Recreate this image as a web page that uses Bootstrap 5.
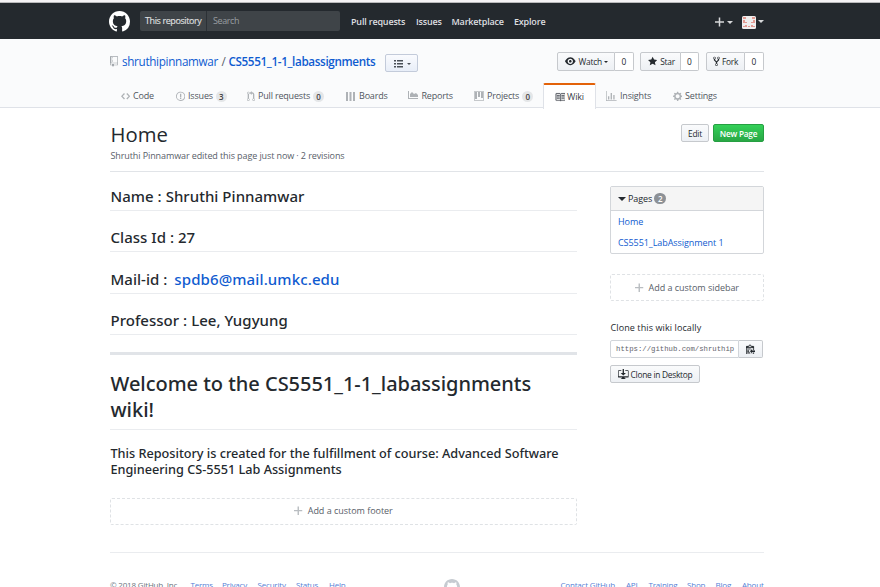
<!DOCTYPE html>
<html lang="en">
<head>
<meta charset="utf-8">
<title>Home · CS5551_1-1_labassignments Wiki</title>
<link href="https://cdn.jsdelivr.net/npm/bootstrap@5.3.0/dist/css/bootstrap.min.css" rel="stylesheet">
<style>
  body { font: 400 9px/14px "Open Sans", "Noto Sans", sans-serif; color: #24292e; height: 587px; overflow: hidden; background: #fff; }
  a { color: #0f5bd0; text-decoration: none; }
  svg { fill: currentColor; display: block; flex: none; }
  .page-w { width: 654px; margin: 0 auto 0 110px; }
  .top-edge { height: 3px; background: #f4f2f4; border-bottom: 1px solid #b9b9bb; }
  .site-head { background: #24292e; height: 36px; color: #d6d8d9; font-size: 9px; }
  .site-head .page-w { width: 655px; margin-left: 109px; }
  .search-box { width: 200px; height: 20px; margin-left: 10px; background: #3f4448; border-radius: 2px; overflow: hidden; letter-spacing: -.4px; line-height: 20px; }
  .search-box .scope { width: 67px; padding-left: 5px; border-right: 1px solid #2c3136; color: #e0e2e3; -webkit-text-stroke: .1px currentColor; }
  .search-box .query { padding-left: 6px; color: #989da0; }
  .site-nav a { color: #dedfe0; font-weight: 600; letter-spacing: -.18px; }
  .site-nav { margin-left: 11px; line-height: 16px; padding-top: 1px; }
  .site-nav a:nth-child(1) { width: 65px; }
  .site-nav a:nth-child(2) { width: 35.5px; }
  .site-nav a:nth-child(3) { width: 62.5px; }
  .caret-d { width: 0; height: 0; border: 3px solid transparent; border-top-color: currentColor; border-bottom: 0; flex: none; }
  .repo-head { background: #fafbfc; height: 69px; border-bottom: 1px solid #dfe2e8; }
  .repo-line { height: 44px; }
  .repo-title { font-size: 11.7px; line-height: 18px; letter-spacing: -.32px; padding-top: 13px; }
  .repo-title .repo-name { font-weight: 600; letter-spacing: -.36px; }
  .slash { margin: 0 3px 0 3.5px; color: #586069; }
  .gh-btn { height: 19px; border: 1px solid #c6c9cd; border-radius: 2px; background: linear-gradient(#fafbfc, #edf0f4); color: #24292e; font-size: 8.4px; font-weight: 500; line-height: 17px; letter-spacing: -.27px; display: flex; align-items: center; white-space: nowrap; }
  .list-btn { width: 33px; height: 18px; margin: 2px 0 0 10px; padding: 1px 0 0 8px; gap: 4px; color: #4a5057; border-color: #c3cbda; background: linear-gradient(#fafbfe, #e8eef8); }
  .list-btn .caret-d { border-width: 2.5px; border-bottom: 0; }
  .social { padding-top: 13px; }
  .social .gh-btn { border-radius: 2px 0 0 2px; }
  .social .tally { height: 19px; border: 1px solid #c6c9cd; border-left: 0; border-radius: 0 2px 2px 0; background: #fff; font-size: 8.4px; font-weight: 500; line-height: 17px; text-align: center; }
  .repo-tabs { height: 25px; color: #50565e; letter-spacing: -.18px; }
  .repo-tabs .tab { height: 25px; padding: 1px 0 0 11px; display: flex; align-items: center; white-space: nowrap; flex: none; }
  .repo-tabs .glyph { color: #aeb2b6; flex: none; }
  .repo-tabs .active-tab { background: #fff; border: 1px solid #dfe2e8; border-width: 0 1px; border-top: 2px solid #e36209; color: #3c4249; border-radius: 2px 2px 0 0; height: 26px; padding-left: 10.5px; padding-top: 0; }
  .active-tab .glyph { color: #51565c; }
  .tally-pill { height: 11px; min-width: 11px; margin-left: 3px; border-radius: 6px; background: #e4e6e8; color: #444; font-size: 8px; line-height: 11px; font-weight: 600; text-align: center; letter-spacing: 0; display: inline-block; }
  .w-code { width: 55px } .w-code .glyph { width: 12px }
  .w-issues { width: 71px } .w-issues .glyph { width: 12px }
  .w-pulls { width: 99px } .w-pulls .glyph { width: 11px }
  .w-boards { width: 62px } .w-boards .glyph { width: 13px }
  .w-reports { width: 66px } .w-reports .glyph { width: 13.5px }
  .w-projects { width: 80px } .w-projects .glyph { width: 13px }
  .w-wiki { width: 53px } .w-wiki .glyph { width: 12.5px }
  .w-insights { width: 66.5px; margin-left: -1px } .w-insights .glyph { width: 14px }
  .w-settings .glyph { width: 12.5px }
  .wiki-head { height: 64px; border-bottom: 1px solid #e1e4e8; }
  .wiki-title { font-size: 20.3px; line-height: 28px; font-weight: 400; letter-spacing: 0; margin: 12px 0 1px .5px; }
  .wiki-meta { color: #586069; letter-spacing: -.1px; line-height: 14px; padding-left: .5px; }
  .btn-new { border-color: #269f42; color: #fff; background: linear-gradient(#34d058, #28a745); font-weight: 600; font-size: 8.2px; letter-spacing: -.2px; }
  .wiki-main { width: 467px; }
  .wiki-main h1, .wiki-main h2, .wiki-main h3 { font-family: "Noto Sans", "Open Sans", sans-serif; font-weight: 500; margin: 0; padding-left: .5px; }
  .wiki-main h2 { font-size: 15px; line-height: 20px; letter-spacing: .03px; height: 25px; border-bottom: 1px solid #eaecef; margin-bottom: 16.4px; }
  .wiki-main h2 a { margin-left: 3px; letter-spacing: .12px; }
  .wiki-main h1 { font-size: 20px; line-height: 26.3px; letter-spacing: -.03px; height: 59px; border-bottom: 1px solid #eaecef; margin-top: 16px; }
  .wiki-main h3 { font-size: 12.7px; line-height: 16.5px; letter-spacing: -.01px; padding-top: 15px; }
  .thick-rule { height: 3px; background: #e1e4e8; }
  .dashed-add { height: 27px; border: 1px dashed #dfe2e5; border-radius: 2px; color: #586069; letter-spacing: -.03px; display: flex; align-items: center; justify-content: center; gap: 5px; }
  .dashed-add svg { color: #b9bdc1; }
  .wiki-side { width: 154px; }
  .pages-box { height: 68px; border: 1px solid #d3d6da; border-radius: 2px; letter-spacing: -.06px; }
  .pages-top { height: 24px; background: #f5f5f5; border-bottom: 1px solid #d3d6da; padding-left: 7px; }
  .pages-count { background: #8d9196; color: #fff; width: 12px; height: 11px; margin-left: 2px; }
  .clone-label { letter-spacing: .1px; padding-left: .5px; }
  .clone-url { width: 129px; height: 18px; border: 1px solid #d1d5da; border-radius: 2px 0 0 2px; padding: 0 5px; color: #5f646c; font: 7.3px/16px "Liberation Mono", monospace; letter-spacing: 0; white-space: nowrap; }
  .foot { border-top: 1px solid #eaecef; color: #6a737d; font-size: 8px; line-height: 12px; letter-spacing: -.19px; height: 46px; padding-top: 26px; }
  .foot a, .foot span { flex: none; white-space: nowrap; color: #5580d5; }
  .foot span { color: #6a737d; }
  .foot .f1 { width: 80.5px } .foot .f2 { width: 31.5px } .foot .f3 { width: 35.5px } .foot .f4 { width: 38.5px } .foot .f5 { width: 33px } .foot .f6 { width: 114.5px }
  .foot .f7 { width: 65.5px } .foot .f8 { width: 22.5px } .foot .f9 { width: 38.5px } .foot .f10 { width: 28.5px } .foot .f11 { width: 26.5px }
  .foot svg { color: #c6cbd1; margin-right: 101px; }
</style>
<script src="https://cdn.jsdelivr.net/npm/bootstrap@5.3.0/dist/js/bootstrap.bundle.min.js"></script>
</head>
<body>
<svg width="0" height="0" class="position-absolute">
  <symbol id="mark-gh" viewBox="0 0 16 16"><path d="M8 0C3.58 0 0 3.58 0 8c0 3.54 2.29 6.53 5.47 7.59.4.07.55-.17.55-.38 0-.19-.01-.82-.01-1.49-2.01.37-2.53-.49-2.69-.94-.09-.23-.48-.94-.82-1.13-.28-.15-.68-.52-.01-.53.63-.01 1.08.58 1.23.82.72 1.21 1.87.87 2.33.66.07-.52.28-.87.51-1.07-1.78-.2-3.64-.89-3.64-3.95 0-.87.31-1.59.82-2.15-.08-.2-.36-1.02.08-2.12 0 0 .67-.21 2.2.82.64-.18 1.32-.27 2-.27.68 0 1.36.09 2 .27 1.53-1.04 2.2-.82 2.2-.82.44 1.1.16 1.92.08 2.12.51.56.82 1.27.82 2.15 0 3.07-1.87 3.75-3.65 3.95.29.25.54.73.54 1.48 0 1.07-.01 1.93-.01 2.2 0 .21.15.46.55.38A8.013 8.013 0 0 0 16 8c0-4.42-3.58-8-8-8z"/></symbol>
  <symbol id="i-plus" viewBox="0 0 12 16"><path d="M12 9H7v5H5V9H0V7h5V2h2v5h5z"/></symbol>
</svg>

<div class="top-edge"></div>
<header class="site-head">
  <div class="page-w d-flex align-items-center h-100">
    <svg class="text-white" width="21" height="21"><use href="#mark-gh"/></svg>
    <div class="search-box d-flex"><div class="scope">This repository</div><div class="query">Search</div></div>
    <nav class="site-nav d-flex"><a href="#">Pull requests</a><a href="#">Issues</a><a href="#">Marketplace</a><a href="#">Explore</a></nav>
    <div class="d-flex align-items-center ms-auto">
      <svg width="9" height="12" style="margin-top:2px"><use href="#i-plus"/></svg>
      <span class="caret-d" style="margin:2px 9px 0 3px"></span>
      <svg width="14" height="13" viewBox="0 0 14 13" style="margin-top:2px"><rect width="14" height="13" rx="1.5" fill="#f0eeee"/><path fill="#e39a92" d="M1 1h3v2H1zM10 1h3v2h-3zM1 4h2v2h2v1H1zM11 4h2v3H9V6h2zM1 10h2V9h2v2H1zM6 10h2v1H6zM9 9h2v1h2v1H9z"/></svg>
      <span class="caret-d" style="margin-left:2px"></span>
    </div>
  </div>
</header>

<section class="repo-head">
  <div class="page-w">
    <div class="repo-line d-flex">
      <div class="repo-title d-flex">
        <svg class="mt-1" width="8" height="10.7" viewBox="0 0 12 16" style="color:#a3a8ad"><path d="M4 9H3V8h1v1zm0-3H3v1h1V6zm0-2H3v1h1V4zm0-2H3v1h1V2zm8-1v12c0 .55-.45 1-1 1H6v2l-1.5-1.5L3 16v-2H1c-.55 0-1-.45-1-1V1c0-.55.45-1 1-1h10c.55 0 1 .45 1 1zm-1 10H1v2h2v-1h3v1h5v-2zm0-10H2v9h9V1z"/></svg>
        <a class="ms-1" href="#">shruthipinnamwar</a><span class="slash">/</span><a class="repo-name" href="#">CS5551_1-1_labassignments</a>
        <div class="gh-btn list-btn">
          <svg width="9" height="9" viewBox="0 0 9 9"><path d="M0 1h2v1.4H0zM3 1h6v1.4H3zM0 4h2v1.4H0zM3 4h6v1.4H3zM0 7h2v1.4H0zM3 7h6v1.4H3z"/></svg><span class="caret-d"></span>
        </div>
      </div>
      <div class="social d-flex ms-auto">
        <div class="gh-btn" style="width:58px;padding-left:7px"><svg style="margin-right:3px" width="10.6" height="10.6" viewBox="0 0 16 16"><path d="M8.06 2C3 2 0 8 0 8s3 6 8.06 6C13 14 16 8 16 8s-3-6-7.94-6zM8 12c-2.2 0-4-1.78-4-4 0-2.2 1.8-4 4-4 2.22 0 4 1.8 4 4 0 2.22-1.78 4-4 4zm2-4c0 1.11-.89 2-2 2-1.11 0-2-.89-2-2 0-1.11.89-2 2-2 1.11 0 2 .89 2 2z"/></svg>Watch<span class="caret-d" style="margin-left:2px;border-width:2.6px 2.6px 0"></span></div><div class="tally" style="width:19px">0</div>
        <div class="gh-btn" style="width:41px;padding-left:7px;margin-left:6px"><svg style="margin-right:3px" width="9.3" height="10.6" viewBox="0 0 14 16"><path d="M14 6l-4.9-.64L7 1 4.9 5.36 0 6l3.6 3.26L2.67 14 7 11.67 11.33 14l-.93-4.74z"/></svg>Star</div><div class="tally" style="width:18px">0</div>
        <div class="gh-btn" style="width:39px;padding-left:6px;margin-left:7px"><svg style="margin-right:2px" width="7" height="10.6" viewBox="0 0 10 16"><path d="M8 1a1.993 1.993 0 0 0-1 3.72V6L5 8 3 6V4.72A1.993 1.993 0 0 0 2 1a1.993 1.993 0 0 0-1 3.72V6.5l3 3v1.78A1.993 1.993 0 0 0 5 15a1.993 1.993 0 0 0 1-3.72V9.5l3-3V4.72A1.993 1.993 0 0 0 8 1zM2 4.2C1.34 4.2.8 3.65.8 3c0-.65.55-1.2 1.2-1.2.65 0 1.2.55 1.2 1.2 0 .65-.55 1.2-1.2 1.2zm3 10c-.66 0-1.2-.55-1.2-1.2 0-.65.55-1.2 1.2-1.2.65 0 1.2.55 1.2 1.2 0 .65-.55 1.2-1.2 1.2zm3-10c-.66 0-1.2-.55-1.2-1.2 0-.65.55-1.2 1.2-1.2.65 0 1.2.55 1.2 1.2 0 .65-.55 1.2-1.2 1.2z"/></svg>Fork</div><div class="tally" style="width:19px">0</div>
      </div>
    </div>
    <nav class="repo-tabs d-flex">
      <div class="tab w-code"><div class="glyph"><svg width="9.3" height="10.6" viewBox="0 0 14 16"><path d="M9.5 3L8 4.5 11.5 8 8 11.5 9.5 13 14 8 9.5 3zm-5 0L0 8l4.5 5L6 11.5 2.5 8 6 4.5 4.5 3z"/></svg></div>Code</div>
      <div class="tab w-issues"><div class="glyph"><svg width="9.3" height="10.6" viewBox="0 0 14 16"><path d="M7 2.3c3.14 0 5.7 2.56 5.7 5.7s-2.56 5.7-5.7 5.7A5.71 5.71 0 0 1 1.3 8c0-3.14 2.56-5.7 5.7-5.7zM7 1C3.14 1 0 4.14 0 8s3.14 7 7 7 7-3.14 7-7-3.14-7-7-7zm1 3H6v5h2V4zm0 6H6v2h2v-2z"/></svg></div>Issues<span class="tally-pill">3</span></div>
      <div class="tab w-pulls"><div class="glyph"><svg width="8" height="10.6" viewBox="0 0 12 16"><path d="M11 11.28V5c-.03-.78-.34-1.47-.94-2.06C9.46 2.35 8.78 2.03 8 2H7V0L4 3l3 3V4h1c.27.02.48.11.69.31.21.2.3.42.31.69v6.28A1.993 1.993 0 0 0 10 15a1.993 1.993 0 0 0 1-3.72zm-1 2.92c-.66 0-1.2-.55-1.2-1.2 0-.65.55-1.2 1.2-1.2.65 0 1.2.55 1.2 1.2 0 .65-.55 1.2-1.2 1.2zM4 3c0-1.11-.89-2-2-2a1.993 1.993 0 0 0-1 3.72v6.56A1.993 1.993 0 0 0 2 15a1.993 1.993 0 0 0 1-3.72V4.72c.59-.34 1-.98 1-1.72zm-.8 10c0 .66-.55 1.2-1.2 1.2-.65 0-1.2-.55-1.2-1.2 0-.65.55-1.2 1.2-1.2.65 0 1.2.55 1.2 1.2zM2 4.2C1.34 4.2.8 3.65.8 3c0-.65.55-1.2 1.2-1.2.65 0 1.2.55 1.2 1.2 0 .65-.55 1.2-1.2 1.2z"/></svg></div>Pull requests<span class="tally-pill">0</span></div>
      <div class="tab w-boards"><div class="glyph"><svg width="9" height="9" viewBox="0 0 9 9"><path d="M0 0h2v9H0zM3.5 0h2v9h-2zM7 0h2v9H7z"/></svg></div>Boards</div>
      <div class="tab w-reports"><div class="glyph"><svg width="11" height="10" viewBox="0 0 11 10"><path d="M0 0h1v7h9v1H0zM2 6V3l2-2L6 3l2-1 2 2v2z"/></svg></div>Reports</div>
      <div class="tab w-projects"><div class="glyph"><svg width="10" height="10" viewBox="0 0 10 10"><path fill-rule="evenodd" d="M0 0h10v10H0zM1 1v8h8V1z" opacity=".7"/><path d="M1 1h2v7H1zM4 1h2v5H4zM7 1h2v6H7z"/></svg></div>Projects<span class="tally-pill">0</span></div>
      <div class="tab active-tab w-wiki"><div class="glyph"><svg width="10.6" height="10.6" viewBox="0 0 16 16"><path d="M3 5h4v1H3V5zm0 3h4V7H3v1zm0 2h4V9H3v1zm11-5h-4v1h4V5zm0 2h-4v1h4V7zm0 2h-4v1h4V9zm2-6v9c0 .55-.45 1-1 1H9.5l-1 1-1-1H2c-.55 0-1-.45-1-1V3c0-.55.45-1 1-1h5.5l1 1 1-1H15c.55 0 1 .45 1 1zm-8 .5L7.5 3H2v9h6V3.5zm7-.5H9.5l-.5.5V12h6V3z" stroke="currentColor" stroke-width=".4"/></svg></div>Wiki</div>
      <div class="tab w-insights"><div class="glyph"><svg width="10.6" height="10.6" viewBox="0 0 16 16"><path d="M16 14v1H0V0h1v14h15zM5 13H3V8h2v5zm4 0H7V3h2v10zm4 0h-2V6h2v7z"/></svg></div>Insights</div>
      <div class="tab w-settings"><div class="glyph"><svg width="9.3" height="10.6" viewBox="0 0 14 16"><path d="M14 8.77v-1.6l-1.94-.64-.45-1.09.88-1.84-1.13-1.13-1.81.91-1.09-.45-.69-1.92h-1.6l-.63 1.94-1.11.45-1.84-.88-1.13 1.13.91 1.81-.45 1.09L0 7.23v1.59l1.94.64.45 1.09-.88 1.84 1.13 1.13 1.81-.91 1.09.45.69 1.92h1.59l.63-1.94 1.11-.45 1.84.88 1.13-1.13-.92-1.81.47-1.09L14 8.75v.02zM7 11c-1.66 0-3-1.34-3-3s1.34-3 3-3 3 1.34 3 3-1.34 3-3 3z"/></svg></div>Settings</div>
    </nav>
  </div>
</section>

<main class="page-w">
  <div class="wiki-head d-flex justify-content-between">
    <div><h1 class="wiki-title">Home</h1><div class="wiki-meta">Shruthi Pinnamwar edited this page just now · 2 revisions</div></div>
    <div class="d-flex gap-1 pt-3"><div class="gh-btn justify-content-center" style="width:28px;height:18px">Edit</div><div class="gh-btn btn-new justify-content-center" style="width:51px;height:18px">New Page</div></div>
  </div>
  <div class="d-flex justify-content-between">
    <article class="wiki-main" style="padding-top:14px">
      <h2>Name : Shruthi Pinnamwar</h2>
      <h2>Class Id : 27</h2>
      <h2>Mail-id : <a href="#">spdb6@mail.umkc.edu</a></h2>
      <h2>Professor : Lee, Yugyung</h2>
      <div class="thick-rule"></div>
      <h1>Welcome to the CS5551_1-1_labassignments wiki!</h1>
      <h3>This Repository is created for the fulfillment of course: Advanced Software Engineering CS-5551 Lab Assignments</h3>
      <div class="dashed-add" style="margin-top:20px"><svg width="8.5" height="11.3"><use href="#i-plus"/></svg>Add a custom footer</div>
    </article>
    <aside class="wiki-side" style="padding-top:14px">
      <div class="pages-box">
        <div class="pages-top d-flex align-items-center"><span class="caret-d" style="border-width:4px 4px 0;margin-right:2px"></span>Pages<span class="tally-pill pages-count">2</span></div>
        <div style="padding:4px 7px"><a class="d-block" href="#">Home</a><a class="d-block" style="margin-top:7px" href="#">CS5551_LabAssignment 1</a></div>
      </div>
      <div class="dashed-add" style="margin-top:20px"><svg width="8.5" height="11.3"><use href="#i-plus"/></svg>Add a custom sidebar</div>
      <div class="clone-label" style="margin-top:20px">Clone this wiki locally</div>
      <div class="d-flex" style="margin-top:5px"><div class="clone-url">https://github.com/shruthip</div><div class="gh-btn justify-content-center" style="width:24px;height:18px;border-left:0;border-radius:0 2px 2px 0"><svg width="9.3" height="10.6" viewBox="0 0 14 16"><path stroke="currentColor" stroke-width=".3" d="M2 13h4v1H2v-1zm5-6H2v1h5V7zm2 3V8l-3 3 3 3v-2h5v-2H9zM4.5 9H2v1h2.5V9zM2 12h2.5v-1H2v1zm9 1h1v2c-.02.28-.11.52-.3.7-.19.18-.42.28-.7.3H1c-.55 0-1-.45-1-1V4c0-.55.45-1 1-1h3c0-1.11.89-2 2-2 1.11 0 2 .89 2 2h3c.55 0 1 .45 1 1v5h-1V6H1v9h10v-2zM2 5h8c0-.55-.45-1-1-1H8c-.55 0-1-.45-1-1s-.45-1-1-1-1 .45-1 1-.45 1-1 1H3c-.55 0-1 .45-1 1z"/></svg></div></div>
      <div class="gh-btn" style="width:90px;height:18px;margin-top:7px;padding-left:7px"><svg style="margin-right:2px" width="10.6" height="10.6" viewBox="0 0 16 16"><path d="M4 6h3V0h2v6h3l-4 4-4-4zm11-4h-4v1h4v8H1V3h4V2H1c-.55 0-1 .45-1 1v9c0 .55.45 1 1 1h5.34c-.25.61-.86 1.39-2.34 2h8c-1.48-.61-2.09-1.39-2.34-2H15c.55 0 1-.45 1-1V3c0-.55-.45-1-1-1z"/></svg>Clone in Desktop</div>
    </aside>
  </div>
  <footer class="foot d-flex" style="margin-top:27px">
    <span class="f1">© 2018 GitHub, Inc.</span><a class="f2" href="#">Terms</a><a class="f3" href="#">Privacy</a><a class="f4" href="#">Security</a><a class="f5" href="#">Status</a><a class="f6" href="#">Help</a>
    <svg width="16" height="16"><use href="#mark-gh"/></svg>
    <a class="f7" href="#">Contact GitHub</a><a class="f8" href="#">API</a><a class="f9" href="#">Training</a><a class="f10" href="#">Shop</a><a class="f11" href="#">Blog</a><a href="#">About</a>
  </footer>
</main>
</body>
</html>
